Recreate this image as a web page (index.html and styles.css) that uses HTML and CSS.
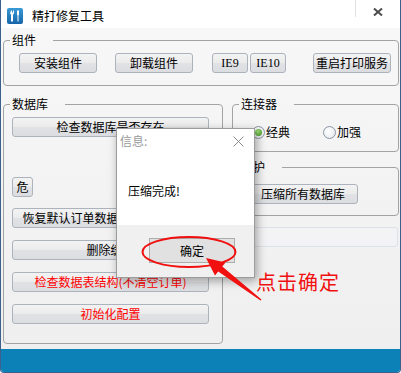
FILE: index.html
```html
<!DOCTYPE html>
<html lang="zh-CN">
<head>
  <meta charset="UTF-8">
  <title>精打修复工具</title>
  <link rel="stylesheet" href="styles.css">
</head>
<body>
  <div class="window">
    <div class="titlebar">
      <svg class="app-icon" width="16" height="16" viewBox="0 0 16 16">
        <defs>
          <linearGradient id="ig" x1="0" y1="0" x2="0" y2="1">
            <stop offset="0" stop-color="#3a9ad8"/>
            <stop offset="1" stop-color="#1565a8"/>
          </linearGradient>
        </defs>
        <rect x="0" y="0" width="16" height="16" rx="2" fill="url(#ig)"/>
        <path d="M4 2.5 h1 v2 h1 v-2 h1 v3 l-1 1 v7 h-2 v-7 l-1 -1z" fill="#fff"/>
        <path d="M10 2.5 h2 v4 l-0.5 1 v6 h-1 v-6 l-0.5 -1z" fill="#fff"/>
      </svg>
      <span class="title">精打修复工具</span>
      <span class="tb-sep"></span>
      <svg class="tb-close" width="10" height="8" viewBox="0 0 10 8">
        <path d="M1 0.5 L9 7.5 M9 0.5 L1 7.5" stroke="#4d4d4d" stroke-width="2"/>
      </svg>
    </div>

    <div class="content">
      <fieldset class="group group-components">
        <legend>组件</legend>
        <div class="comp-row">
          <button class="btn btn-mid">安装组件</button>
          <button class="btn btn-mid uninstall">卸载组件</button>
          <button class="btn btn-ie ie9">IE9</button>
          <button class="btn btn-ie ie10">IE10</button>
          <button class="btn btn-mid restart">重启打印服务</button>
        </div>
      </fieldset>

      <div class="columns">
        <fieldset class="group group-db">
          <legend>数据库</legend>
          <div class="db-list">
            <button class="btn btn-wide">检查数据库是否存在</button>
            <button class="btn btn-tiny">危</button>
            <button class="btn btn-wide gap-s">恢复默认订单数据(清空订单数据)</button>
            <button class="btn btn-wide gap-m">删除缓存</button>
            <button class="btn btn-wide gap-m danger">检查数据表结构(不清空订单)</button>
            <button class="btn btn-wide gap-m danger">初始化配置</button>
          </div>
        </fieldset>

        <div class="side">
          <fieldset class="group group-conn">
            <legend>连接器</legend>
            <div class="radio-row">
              <label class="radio"><span class="dot checked"></span>经典</label>
              <label class="radio second"><span class="dot"></span>加强</label>
            </div>
          </fieldset>

          <fieldset class="group group-maint">
            <legend>维护</legend>
            <div class="maint-body">
              <button class="btn btn-compress">压缩所有数据库</button>
            </div>
          </fieldset>

          <div class="progress"></div>
        </div>
      </div>
    </div>

    <div class="statusbar"></div>

    <!-- 弹出的提示框 -->
    <div class="dialog">
      <div class="dlg-head">
        <span class="dlg-title">信息:</span>
        <svg class="dlg-close" width="11" height="11" viewBox="0 0 11 11">
          <path d="M0.5 0.5 L10.5 10.5 M10.5 0.5 L0.5 10.5" stroke="#8a8a8a" stroke-width="1"/>
        </svg>
      </div>
      <div class="dlg-msg">压缩完成!</div>
      <div class="dlg-foot">
        <button class="dlg-ok">确定</button>
      </div>
    </div>

    <!-- 标注 -->
    <svg class="annot" width="401" height="373" viewBox="0 0 401 373">
      <ellipse cx="188" cy="252" rx="46.5" ry="15" fill="none" stroke="#f01010" stroke-width="2"/>
      <polygon points="205,258 224.5,262.5 221.3,266.4 260.5,299.6 259.5,300.6 217.2,271.4 214,275.6" fill="#f01010"/>
    </svg>
    <div class="annot-text">点击确定</div>
  </div>
</body>
</html>
```

FILE: styles.css
```css
body {
  margin: 0;
  font-family: "Noto Sans CJK SC", "Noto Sans", sans-serif;
  font-size: 12px;
  background: #fff;
}
.window {
  position: relative;
  width: 401px;
  height: 373px;
  box-sizing: border-box;
  border: 1px solid #3d5f8c;
  border-top: none;
  border-radius: 0 0 4px 4px;
  display: flex;
  flex-direction: column;
  overflow: hidden;
  background: #f1f1f1;
}
.titlebar {
  height: 28px;
  flex: none;
  background: #fff;
  display: flex;
  align-items: flex-start;
  position: relative;
}
.app-icon {
  margin: 8px 0 0 6px;
}
.title {
  margin: 9px 0 0 9px;
  line-height: 14px;
  color: #000;
}
.tb-sep {
  width: 1px;
  height: 17px;
  background: #e2e2e2;
  margin-left: auto;
}
.tb-close {
  margin: 8px 17px 0 17px;
}
.content {
  flex: 1;
  padding: 5px 1px 0 2px;
  background: linear-gradient(#f7f7f7, #efefef);
}

/* group box */
.group {
  margin: 0;
  padding: 0;
  border: 1px solid #a3a3a3;
  border-radius: 4px;
  min-width: 0;
}
.group legend {
  margin-left: 6px;
  padding: 0 17px 0 2px;
  line-height: 14px;
  color: #000;
}

.btn {
  font-family: "Noto Sans CJK SC", sans-serif;
  font-size: 12px;
  line-height: 14px;
  height: 20px;
  padding: 0;
  border: 1px solid #adb3bc;
  border-radius: 3px;
  background: linear-gradient(#f3f3f4, #ebebec 50%, #e1e2e5 51%, #dcdde0);
  color: #000;
  box-sizing: border-box;
  display: block;
}
.danger {
  color: #ff0000;
}

.comp-row {
  display: flex;
  padding: 6px 0 12px 15px;
}
.btn-mid {
  width: 78px;
}
.uninstall {
  margin-left: 18px;
}
.btn-ie {
  width: 36px;
  font-family: "Liberation Serif", serif;
  font-size: 12px;
}
.ie9 {
  margin-left: 19px;
}
.ie10 {
  margin-left: 2px;
}
.restart {
  margin-left: 27px;
}

.columns {
  display: flex;
  align-items: flex-start;
  margin-top: 11px;
}
.group-db {
  width: 220px;
  box-sizing: border-box;
  flex: none;
}
.db-list {
  padding: 6px 0 19px 8px;
}
.btn-wide {
  width: 197px;
}
.btn-tiny {
  width: 21px;
  margin-top: 40px;
}
.gap-s {
  margin-top: 11px;
}
.gap-m {
  margin-top: 12px;
}

.side {
  flex: 1;
  margin-left: 9px;
}
.radio-row {
  display: flex;
  padding: 14px 0 12px 19px;
  line-height: 14px;
}
.radio {
  display: flex;
  align-items: center;
}
.radio.second {
  margin-left: 33px;
}
.dot {
  width: 11px;
  height: 11px;
  border: 1px solid #8b97a6;
  border-radius: 50%;
  background: radial-gradient(circle at 40% 40%, #ffffff, #e2e5ea);
  margin-right: 1px;
  position: relative;
}
.dot.checked::after {
  content: "";
  position: absolute;
  left: 2px;
  top: 2px;
  width: 7px;
  height: 7px;
  border-radius: 50%;
  background: radial-gradient(circle at 40% 35%, #9fe07a, #3f9420);
}

.group-maint {
  margin-top: 8px;
}
.maint-body {
  padding: 10px 0 11px 15px;
}
.btn-compress {
  width: 110px;
}
.progress {
  margin-top: 11px;
  height: 20px;
  box-sizing: border-box;
  border: 1px solid #dde1e8;
  border-radius: 3px;
  background: #f3f3f5;
  margin-right: 1px;
}

.statusbar {
  height: 23px;
  flex: none;
  background: #0b81b8;
}

/* 对话框 */
.dialog {
  position: absolute;
  left: 115px;
  top: 128px;
  width: 139px;
  height: 150px;
  box-sizing: border-box;
  border: 1px solid #9c9c9c;
  background: #fff;
  box-shadow: 2px 3px 9px rgba(0, 0, 0, 0.35);
  display: flex;
  flex-direction: column;
}
.dlg-head {
  display: flex;
  justify-content: space-between;
  padding: 5px 10px 0 3px;
  line-height: 14px;
}
.dlg-title {
  color: #9a9a9a;
}
.dlg-close {
  margin-top: 2px;
}
.dlg-msg {
  margin: 36px 0 0 11px;
  line-height: 14px;
  color: #000;
}
.dlg-foot {
  margin-top: auto;
  height: 52px;
  background: #f0f0f0;
  padding: 13px 0 0 32px;
  box-sizing: border-box;
}
.dlg-ok {
  width: 86px;
  height: 25px;
  border: 1px solid #adadad;
  background: #e1e1e1;
  font-family: "Noto Sans CJK SC", sans-serif;
  font-size: 12px;
  padding: 0;
  color: #000;
}

.annot {
  position: absolute;
  left: 0;
  top: 0;
  pointer-events: none;
}
.annot-text {
  position: absolute;
  left: 255px;
  top: 270px;
  font-size: 20px;
  line-height: 24px;
  color: #f01010;
  letter-spacing: 1px;
}
```
